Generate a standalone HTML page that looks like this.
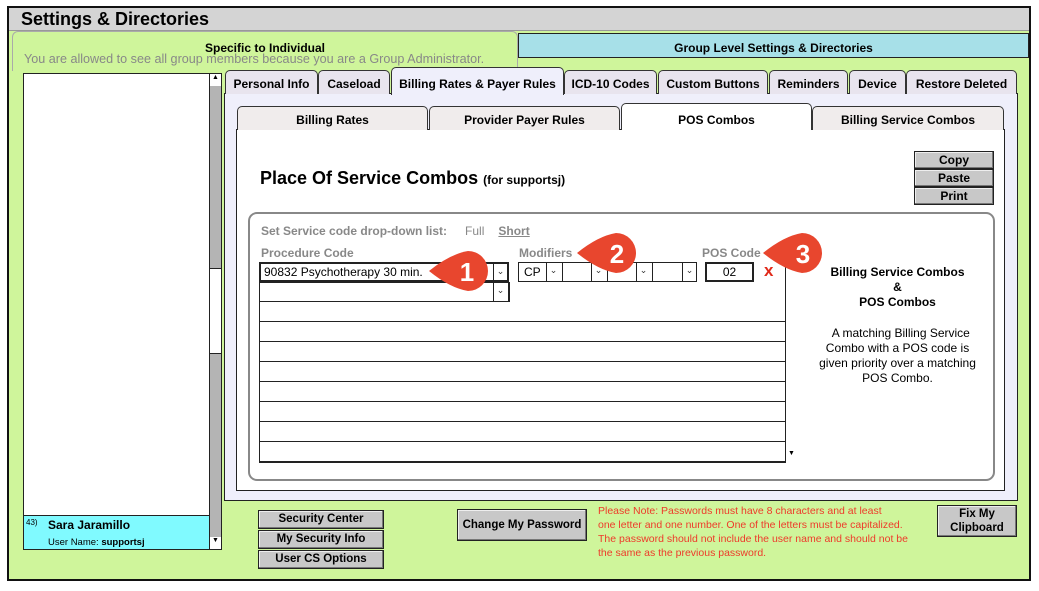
<!DOCTYPE html>
<html><head><meta charset="utf-8"><style>
*{margin:0;padding:0;box-sizing:border-box}
body{width:1039px;height:591px;background:#fff;font-family:"Liberation Sans",Arial,sans-serif;position:relative;overflow:hidden}
.a{position:absolute}
.b{font-weight:bold}
.tab{position:absolute;border:1px solid #333;border-bottom:none;border-radius:5px 5px 0 0;background:#e8e4ee;font-weight:bold;font-size:12px;text-align:center;line-height:26px}
.btn{position:absolute;background:#c8c8c8;border:1px solid #222;box-shadow:inset -1px -1px 0 #777,inset 1px 1px 0 #eee;font-weight:bold;font-size:11.5px;text-align:center}
.cell{position:absolute;border:1px solid #222;background:#fff;font-size:12px}
.dd{position:absolute;width:14px;height:18px;border-left:1px solid #222;font-size:9px;text-align:center;line-height:14px;color:#333}
</style></head><body>
<div class="a" style="left:7px;top:6px;width:1024px;height:575px;border:2px solid #111;background:#cff59b"></div>
<div class="a" style="left:9px;top:8px;width:1020px;height:23px;background:#d4d4d4;border-bottom:1px solid #999"></div>
<div class="a b" style="left:21px;top:9px;font-size:18px">Settings &amp; Directories</div>
<div class="a" style="left:12px;top:31px;width:506px;height:40px;border:1px solid #aaa;border-bottom:none;border-radius:6px 6px 0 0"></div>
<div class="a" style="left:518px;top:33px;width:511px;height:25px;background:#a7e0e8;border:1px solid #222;font-weight:bold;font-size:12px;text-align:center;line-height:28px">Group Level Settings &amp; Directories</div>
<div class="a b" style="left:205px;top:41px;font-size:12px">Specific to Individual</div>
<div class="a" style="left:24px;top:52px;font-size:12.6px;color:#888">You are allowed to see all group members because you are a Group Administrator.</div>
<!-- left list -->
<div class="a" style="left:23px;top:73px;width:199px;height:477px;background:#fff;border:1px solid #222"></div>
<div class="a" style="left:209px;top:74px;width:12px;height:475px;background:#b4b4b4;border-left:1px solid #222"></div>
<div class="a" style="left:210px;top:74px;width:11px;height:12px;background:#fff;font-size:7px;text-align:center">▲</div>
<div class="a" style="left:210px;top:268px;width:11px;height:86px;background:#fff;border-top:1px solid #222;border-bottom:1px solid #222"></div>
<div class="a" style="left:210px;top:537px;width:11px;height:12px;background:#fff;font-size:7px;text-align:center">▼</div>
<div class="a" style="left:24px;top:515px;width:185px;height:34px;background:#80faff;border-top:1px solid #222"></div>
<div class="a" style="left:26px;top:518px;font-size:8px">43)</div>
<div class="a b" style="left:48px;top:518px;font-size:12px">Sara Jaramillo</div>
<div class="a" style="left:48px;top:537px;font-size:9.5px">User Name: <b>supportsj</b></div>
<!-- main tabs -->
<div class="a" style="left:224px;top:93px;width:794px;height:408px;background:#efeffb;border:1px solid #222"></div>
<div class="tab" style="left:225px;top:70px;width:93px;height:24px">Personal Info</div>
<div class="tab" style="left:318px;top:70px;width:72px;height:24px">Caseload</div>
<div class="tab" style="left:391px;top:67px;width:173px;height:28px;background:#efeffb;line-height:32px">Billing Rates &amp; Payer Rules</div>
<div class="tab" style="left:564px;top:70px;width:93px;height:24px">ICD-10 Codes</div>
<div class="tab" style="left:658px;top:70px;width:110px;height:24px">Custom Buttons</div>
<div class="tab" style="left:769px;top:70px;width:79px;height:24px">Reminders</div>
<div class="tab" style="left:849px;top:70px;width:57px;height:24px">Device</div>
<div class="tab" style="left:906px;top:70px;width:111px;height:24px">Restore Deleted</div>
<!-- inner -->
<div class="a" style="left:236px;top:129px;width:769px;height:362px;background:#fff;border:1px solid #222"></div>
<div class="tab" style="left:237px;top:106px;width:191px;height:24px;background:#f0ecec">Billing Rates</div>
<div class="tab" style="left:429px;top:106px;width:191px;height:24px;background:#f0ecec">Provider Payer Rules</div>
<div class="tab" style="left:621px;top:103px;width:191px;height:27px;background:#fff;line-height:32px">POS Combos</div>
<div class="tab" style="left:812px;top:106px;width:192px;height:24px;background:#f0ecec">Billing Service Combos</div>
<div class="a b" style="left:260px;top:168px;font-size:18px">Place Of Service Combos <span style="font-size:12px">(for supportsj)</span></div>
<div class="btn" style="left:914px;top:151px;width:80px;height:18px;font-size:12px;line-height:16px">Copy</div>
<div class="btn" style="left:914px;top:169px;width:80px;height:18px;font-size:12px;line-height:16px">Paste</div>
<div class="btn" style="left:914px;top:187px;width:80px;height:18px;font-size:12px;line-height:16px">Print</div>
<div class="a" style="left:248px;top:212px;width:747px;height:269px;border:2px solid #888;border-radius:9px"></div>
<div class="a b" style="left:261px;top:224px;font-size:12px;color:#888">Set Service code drop-down list:<span style="font-weight:normal;margin-left:18px">Full</span><span style="text-decoration:underline;margin-left:14px">Short</span></div>
<div class="a b" style="left:261px;top:246px;font-size:12px;color:#888">Procedure Code</div>
<div class="a b" style="left:519px;top:246px;font-size:12px;color:#888">Modifiers</div>
<div class="a b" style="left:702px;top:246px;font-size:12px;color:#888">POS Code</div>
<!-- grid -->
<div class="a" style="left:259px;top:262px;width:538px;height:201px;border:1px solid #222;background:#fff"></div>
<div class="a" style="left:259px;top:262px;width:526px;height:201px;background:repeating-linear-gradient(to bottom,transparent 0 19px,#222 19px 20px)"></div>
<div class="a" style="left:785px;top:262px;width:12px;height:201px;border-left:1px solid #222;background:#fff"></div>
<div class="a" style="left:788px;top:267px;width:7px;height:1px;background:#222"></div>
<div class="a" style="left:786px;top:450px;width:11px;height:12px;font-size:7px;text-align:center">▼</div>
<div class="cell" style="left:259px;top:262px;width:250px;height:20px;border-width:2px;background:#fff"><span style="position:absolute;left:3px;top:1px">90832 Psychotherapy 30 min.</span><div class="dd" style="left:232px;top:0">⌄</div></div>
<div class="cell" style="left:259px;top:282px;width:250px;height:20px"><div class="dd" style="left:233px;top:0">⌄</div></div>
<div class="a" style="left:509px;top:262px;width:276px;height:40px;background:#fff"></div>
<div class="cell" style="left:518px;top:262px;width:179px;height:20px"></div>
<div class="a" style="left:524px;top:265px;font-size:12px">CP</div>
<div class="dd" style="left:546px;top:263px">⌄</div>
<div class="dd" style="left:562px;top:263px;width:1px"></div>
<div class="dd" style="left:591px;top:263px">⌄</div>
<div class="dd" style="left:607px;top:263px;width:1px"></div>
<div class="dd" style="left:636px;top:263px">⌄</div>
<div class="dd" style="left:652px;top:263px;width:1px"></div>
<div class="dd" style="left:682px;top:263px">⌄</div>
<div class="cell" style="left:705px;top:262px;width:49px;height:20px;border-width:2px;text-align:center;line-height:16px">02</div>
<div class="a b" style="left:764px;top:261px;font-size:17px;color:#e02a1a">x</div>
<div class="a" style="left:509px;top:282px;width:1px;height:20px;background:#222"></div>
<div class="a b" style="left:800px;top:265px;width:195px;text-align:center;font-size:12px;line-height:15px">Billing Service Combos<br>&amp;<br>POS Combos</div>
<div class="a" style="left:815px;top:326px;width:165px;text-align:center;font-size:12px;line-height:15px">&nbsp;&nbsp;A matching Billing Service Combo with a POS code is given priority over a matching POS Combo.</div>
<!-- callouts -->
<svg class="a" style="left:0;top:0" width="1039" height="591">
<g fill="#e8462e">
<path d="M429 271 Q450 254 468 251 A20 20 0 1 1 468 291 Q450 288 429 271Z"/>
<path d="M577 253 Q598 236 616 233 A20 20 0 1 1 616 273 Q598 270 577 253Z"/>
<path d="M763 253 Q784 236 802 233 A20 20 0 1 1 802 273 Q784 270 763 253Z"/>
</g>
<g fill="#fff" font-family="Liberation Sans,Arial,sans-serif" font-weight="bold" font-size="26" text-anchor="middle">
<text x="467" y="281">1</text><text x="617" y="263">2</text><text x="803" y="263">3</text>
</g>
</svg>
<!-- bottom -->
<div class="btn" style="left:258px;top:510px;width:126px;height:19px;line-height:17px">Security Center</div>
<div class="btn" style="left:258px;top:530px;width:126px;height:19px;line-height:17px">My Security Info</div>
<div class="btn" style="left:258px;top:550px;width:126px;height:19px;line-height:17px">User CS Options</div>
<div class="btn" style="left:457px;top:509px;width:130px;height:32px;line-height:30px">Change My Password</div>
<div class="a" style="left:598px;top:504px;font-size:10.5px;line-height:14px;color:#ee3a2a;width:340px">Please Note: Passwords must have 8 characters and at least<br>one letter and one number. One of the letters must be capitalized.<br>The password should not include the user name and should not be<br>the same as the previous password.</div>
<div class="btn" style="left:937px;top:505px;width:80px;height:32px;line-height:14px;padding-top:1px">Fix My<br>Clipboard</div>
</body></html>
